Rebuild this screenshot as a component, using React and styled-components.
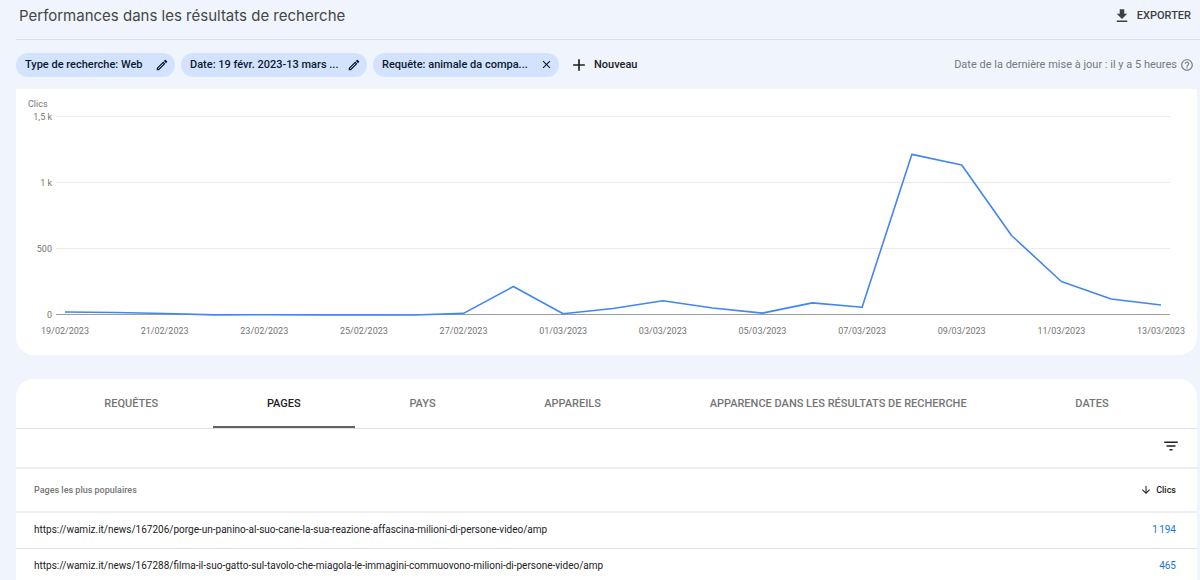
import React from "react";
import styled, { createGlobalStyle } from "styled-components";
import {
  MdAdd,
  MdArrowDownward,
  MdClose,
  MdDownload,
  MdFilterList,
  MdHelpOutline,
  MdOutlineModeEdit,
} from "react-icons/md";

const filters = [
  { label: "Type de recherche: Web", icon: <MdOutlineModeEdit size={14} /> },
  {
    label: "Date: 19 févr. 2023-13 mars ...",
    icon: <MdOutlineModeEdit size={14} />,
    wide: true,
  },
  {
    label: "Requête: animale da compa...",
    icon: <MdClose size={13} />,
    wide: true,
  },
];

const tabs = [
  "Requêtes",
  "Pages",
  "Pays",
  "Appareils",
  "Apparence dans les résultats de recherche",
  "Dates",
];

const pages = [
  {
    url: "https://wamiz.it/news/167206/porge-un-panino-al-suo-cane-la-sua-reazione-affascina-milioni-di-persone-video/amp",
    clicks: "1\u202f194",
  },
  {
    url: "https://wamiz.it/news/167288/filma-il-suo-gatto-sul-tavolo-che-miagola-le-immagini-commuovono-milioni-di-persone-video/amp",
    clicks: "465",
  },
];

// one value per day, from 19/02/2023 to 13/03/2023
const clicks = [
  23, 19, 11, 1, 2, 1, 1, 0, 12, 216, 9, 49, 108, 53, 14, 92, 59, 1217, 1137,
  602, 254, 121, 76,
];

const days = [
  "19/02/2023",
  "21/02/2023",
  "23/02/2023",
  "25/02/2023",
  "27/02/2023",
  "01/03/2023",
  "03/03/2023",
  "05/03/2023",
  "07/03/2023",
  "09/03/2023",
  "11/03/2023",
  "13/03/2023",
];

const ticks = [
  { value: 1500, label: "1,5 k" },
  { value: 1000, label: "1 k" },
  { value: 500, label: "500" },
  { value: 0, label: "0" },
];

const xOf = (index) => 49 + (index * 1096) / 22;
const yOf = (value) => 226 - value * 0.132;

const Chart = () => {
  const points = clicks.map((value, i) => `${xOf(i)},${yOf(value)}`).join(" ");

  return (
    <ChartSvg viewBox="0 0 1181 266" role="img" aria-label="Clics par jour">
      <text x="12" y="18">
        Clics
      </text>
      {ticks.map(({ value, label }) => (
        <g key={value}>
          <text x="36" y={yOf(value) + 3} textAnchor="end">
            {label}
          </text>
          <line
            x1="40"
            x2="1154"
            y1={yOf(value) - 0.5}
            y2={yOf(value) - 0.5}
            stroke={value === 0 ? "#9e9e9e" : "#ebebeb"}
          />
        </g>
      ))}
      {days.map((day, i) => (
        <text key={day} x={xOf(i * 2)} y="245" textAnchor="middle">
          {day}
        </text>
      ))}
      <polyline points={points} />
    </ChartSvg>
  );
};

const App = () => {
  return (
    <>
      <GlobalStyle />
      <Header>
        <h1>Performances dans les résultats de recherche</h1>
        <ExportButton type="button">
          <MdDownload size={18} />
          Exporter
        </ExportButton>
      </Header>
      <Toolbar>
        {filters.map(({ label, icon, wide }) => (
          <Chip key={label} type="button" $wide={wide}>
            {label}
            {icon}
          </Chip>
        ))}
        <NewButton type="button">
          <MdAdd size={20} />
          Nouveau
        </NewButton>
        <Updated>
          Date de la dernière mise à jour : il y a 5 heures
          <MdHelpOutline size={14} />
        </Updated>
      </Toolbar>
      <main>
        <ChartPanel>
          <Chart />
        </ChartPanel>
        <TablePanel>
          <Tabs role="tablist">
            {tabs.map((tab) => (
              <Tab
                key={tab}
                type="button"
                role="tab"
                aria-selected={tab === "Pages"}
                $active={tab === "Pages"}
              >
                {tab}
              </Tab>
            ))}
          </Tabs>
          <FilterBar>
            <button type="button" aria-label="Filtrer">
              <MdFilterList size={18} />
            </button>
          </FilterBar>
          <Table>
            <thead>
              <tr>
                <th>Pages les plus populaires</th>
                <th>
                  <SortButton type="button">
                    <MdArrowDownward size={12} />
                    Clics
                  </SortButton>
                </th>
              </tr>
            </thead>
            <tbody>
              {pages.map((page) => (
                <tr key={page.url}>
                  <td>{page.url}</td>
                  <td>{page.clicks}</td>
                </tr>
              ))}
            </tbody>
          </Table>
        </TablePanel>
      </main>
    </>
  );
};

const GlobalStyle = createGlobalStyle`
  * {
    box-sizing: border-box;
  }

  html {
    scrollbar-width: none;
  }

  body {
    margin: 0;
    background: #f0f4fc;
    color: #202124;
    font-family: Roboto, "Liberation Sans", sans-serif;
  }

  button {
    border: none;
    padding: 0;
    background: transparent;
    color: inherit;
    font: inherit;
    cursor: pointer;
  }

  svg {
    flex-shrink: 0;
  }

  main {
    padding-right: 3px;
    padding-left: 16px;
  }
`;

const Header = styled.header`
  display: flex;
  align-items: center;
  justify-content: space-between;
  height: 40px;
  margin-left: 16px;
  padding: 0 9px 8px 3px;
  border-bottom: 1px solid #d8dfec;

  h1 {
    margin: 0;
    color: #444746;
    font-family: Inter, Roboto, sans-serif;
    font-size: 15px;
    font-weight: 400;
    line-height: 24px;
  }
`;

const ExportButton = styled.button`
  display: flex;
  align-items: center;
  gap: 6px;
  color: #3c4043;
  font-size: 11px;
  font-weight: 500;
  text-transform: uppercase;
`;

const Toolbar = styled.div`
  display: flex;
  align-items: center;
  gap: 6px;
  height: 49px;
  padding: 0 6px 0 16px;
`;

const Chip = styled.button`
  display: flex;
  align-items: center;
  justify-content: space-between;
  width: ${({ $wide }) => ($wide ? "186px" : "159px")};
  height: 24px;
  padding: 0 6px 0 9px;
  border-radius: 12px;
  background: #d3e3fd;
  color: #0b1a33;
  font-size: 11px;
  font-weight: 500;
  white-space: nowrap;
`;

const NewButton = styled.button`
  display: flex;
  align-items: center;
  gap: 5px;
  margin-left: 4px;
  font-size: 11px;
  font-weight: 500;
`;

const Updated = styled.div`
  display: flex;
  align-items: center;
  gap: 3px;
  margin-left: auto;
  color: #757a80;
  font-size: 11px;
`;

const ChartPanel = styled.section`
  overflow: hidden;
  border-radius: 0 0 18px 18px;
  background: #fff;
`;

const ChartSvg = styled.svg`
  display: block;
  width: 100%;
  height: auto;

  text {
    fill: #757575;
    font-size: 9px;
  }

  polyline {
    fill: none;
    stroke: #4285f4;
    stroke-width: 1.6;
    stroke-linejoin: round;
  }
`;

const TablePanel = styled.section`
  margin-top: 24px;
  border-radius: 18px 18px 0 0;
  background: #fff;
`;

const Tabs = styled.div`
  display: flex;
  height: 50px;
  padding: 0 34px;
  border-bottom: 1px solid #e0e0e0;
`;

const Tab = styled.button`
  flex: 1 1 auto;
  border-top: 2px solid transparent;
  border-bottom: 2px solid ${({ $active }) => ($active ? "#5f6368" : "transparent")};
  color: ${({ $active }) => ($active ? "#202124" : "#757575")};
  font-size: 11px;
  font-weight: 500;
  text-transform: uppercase;
`;

const FilterBar = styled.div`
  display: flex;
  align-items: center;
  justify-content: flex-end;
  height: 38px;
  padding: 0 17px 4px 0;

  button {
    display: flex;
  }
`;

const Table = styled.table`
  width: 100%;
  border-collapse: collapse;
  text-align: left;

  tr {
    height: 36px;
    border-top: 1px solid #e0e0e0;
  }

  thead tr {
    height: 44px;
    border-top: 2px solid #eeeeee;
    border-bottom: 2px solid #eeeeee;
  }

  th {
    padding: 0 18px;
    color: #757575;
    font-size: 9px;
    font-weight: 500;
  }

  td {
    padding: 0 18px 2px;
    font-size: 10px;
  }

  td:last-child {
    padding-right: 21px;
    color: #1976d2;
    text-align: right;
  }

  th:last-child {
    padding-right: 21px;
  }
`;

const SortButton = styled.button`
  display: flex;
  align-items: center;
  gap: 4px;
  margin-left: auto;
  color: #202124;
`;

export default App;
